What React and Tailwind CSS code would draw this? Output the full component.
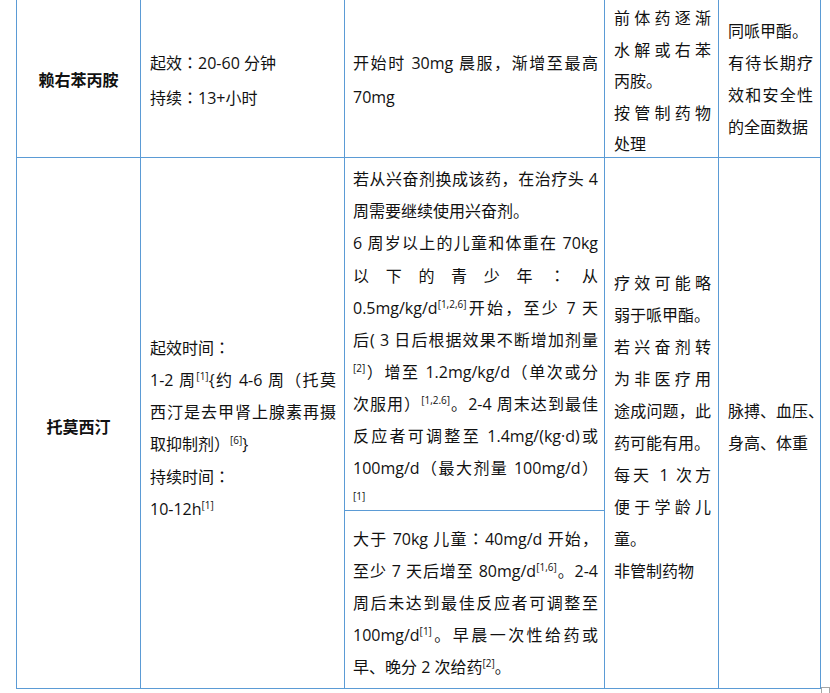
import React from 'react';

// one rendered line of a table cell; full lines are stretched like Word's justify
const Line = ({ children, last }) => (
  <div className={last ? 'whitespace-nowrap' : 'whitespace-nowrap text-justify [text-align-last:justify]'}>
    {children}
  </div>
);

const Ref = ({ children }) => <sup className="text-[10px] -top-[6px]">{children}</sup>;

// full-width colon drawn centred, as in the source document
const Colon = () => <span className="font-['Noto_Sans_CJK_TC',sans-serif]">：</span>;

const App = () => {
  return (
    <div className="min-h-screen bg-white text-[16px] text-[#111] font-['Open_Sans','Noto_Sans_CJK_SC',sans-serif]">
      <div className="ml-[16px] w-[805px]">
        {/* 赖右苯丙胺 row (top edge runs off the page) */}
        <div className="flex h-[158px] border-b border-l border-[#5b9bd5]">
          <div className="flex w-[124px] flex-col justify-center border-r border-[#5b9bd5] pt-[3px] text-center font-bold">
            赖右苯丙胺
          </div>
          <div className="flex w-[204px] flex-col justify-center border-r border-[#5b9bd5] pl-[9px] pr-[8px] pt-[2px] leading-[34px]">
            <Line last>起效<Colon />20-60 分钟</Line>
            <Line last>持续<Colon />13+小时</Line>
          </div>
          <div className="flex w-[260px] flex-col justify-center border-r border-[#5b9bd5] pl-[8px] pr-[6px] pt-[2px] leading-[34px]">
            <Line>开始时 30mg 晨服，渐增至最高</Line>
            <Line last>70mg</Line>
          </div>
          <div className="flex w-[114px] flex-col justify-start border-r border-[#5b9bd5] pl-[9px] pr-[7px] pt-[3px] leading-[31.5px]">
            <Line>前体药逐渐</Line>
            <Line>水解或右苯</Line>
            <Line last>丙胺。</Line>
            <Line>按管制药物</Line>
            <Line last>处理</Line>
          </div>
          <div className="flex w-[102px] flex-col justify-center border-r border-[#5b9bd5] pl-[9px] pr-[7px] leading-[32px]">
            <Line last>同哌甲酯。</Line>
            <Line>有待长期疗</Line>
            <Line>效和安全性</Line>
            <Line last>的全面数据</Line>
          </div>
        </div>

        {/* 托莫西汀 row */}
        <div className="flex h-[531px] border-b border-l border-[#5b9bd5]">
          <div className="flex w-[124px] flex-col justify-center border-r border-[#5b9bd5] pt-[8px] text-center font-bold">
            托莫西汀
          </div>
          <div className="flex w-[204px] flex-col justify-center border-r border-[#5b9bd5] pl-[9px] pr-[8px] pt-[9px] leading-[32px]">
            <Line last>起效时间<Colon /></Line>
            <Line>1-2 周<Ref>[1]</Ref>{'{'}约 4-6 周（托莫</Line>
            <Line>西汀是去甲肾上腺素再摄</Line>
            <Line last>取抑制剂）<Ref>[6]</Ref>{'}'}</Line>
            <Line last>持续时间<Colon /></Line>
            <Line last>10-12h<Ref>[1]</Ref></Line>
          </div>
          <div className="flex w-[260px] flex-col border-r border-[#5b9bd5]">
            <div className="flex h-[353px] flex-col justify-start border-b border-[#5b9bd5] pl-[8px] pr-[6px] pt-[5px] leading-[32px]">
              <Line>若从兴奋剂换成该药，在治疗头 4</Line>
              <Line last>周需要继续使用兴奋剂。</Line>
              <Line>6 周岁以上的儿童和体重在 70kg</Line>
              <Line>以下的青少年<Colon />从</Line>
              <Line>0.5mg/kg/d<Ref>[1,2,6]</Ref>开始，至少 7 天</Line>
              <Line>后( 3 日后根据效果不断增加剂量</Line>
              <Line><Ref>[2]</Ref>）增至 1.2mg/kg/d（单次或分</Line>
              <Line>次服用）<Ref>[1,2.6]</Ref>。2-4 周末达到最佳</Line>
              <Line>反应者可调整至 1.4mg/(kg·d)或</Line>
              <Line>100mg/d（最大剂量 100mg/d）</Line>
              <Line last><Ref>[1]</Ref></Line>
            </div>
            <div className="flex flex-1 flex-col justify-center pl-[8px] pr-[6px] pt-[6px] leading-[32px]">
              <Line>大于 70kg 儿童<Colon />40mg/d 开始，</Line>
              <Line>至少 7 天后增至 80mg/d<Ref>[1,6]</Ref>。2-4</Line>
              <Line>周后未达到最佳反应者可调整至</Line>
              <Line>100mg/d<Ref>[1]</Ref>。早晨一次性给药或</Line>
              <Line last>早、晚分 2 次给药<Ref>[2]</Ref>。</Line>
            </div>
          </div>
          <div className="flex w-[114px] flex-col justify-center border-r border-[#5b9bd5] pl-[9px] pr-[7px] pt-[8px] leading-[32px]">
            <Line>疗效可能略</Line>
            <Line last>弱于哌甲酯。</Line>
            <Line>若兴奋剂转</Line>
            <Line>为非医疗用</Line>
            <Line>途成问题，此</Line>
            <Line last>药可能有用。</Line>
            <Line>每天 1 次方</Line>
            <Line>便于学龄儿</Line>
            <Line last>童。</Line>
            <Line last>非管制药物</Line>
          </div>
          <div className="flex w-[102px] flex-col justify-center border-r border-[#5b9bd5] pl-[9px] pr-[7px] pt-[8px] leading-[32px]">
            <Line>脉搏、血压、</Line>
            <Line last>身高、体重</Line>
          </div>
        </div>

        {/* end-of-table marker */}
        <div className="-mt-[2px] ml-[805px] h-[9px] w-[9px] border border-[#a6a6a6]" />
      </div>
    </div>
  );
};

export default App;
